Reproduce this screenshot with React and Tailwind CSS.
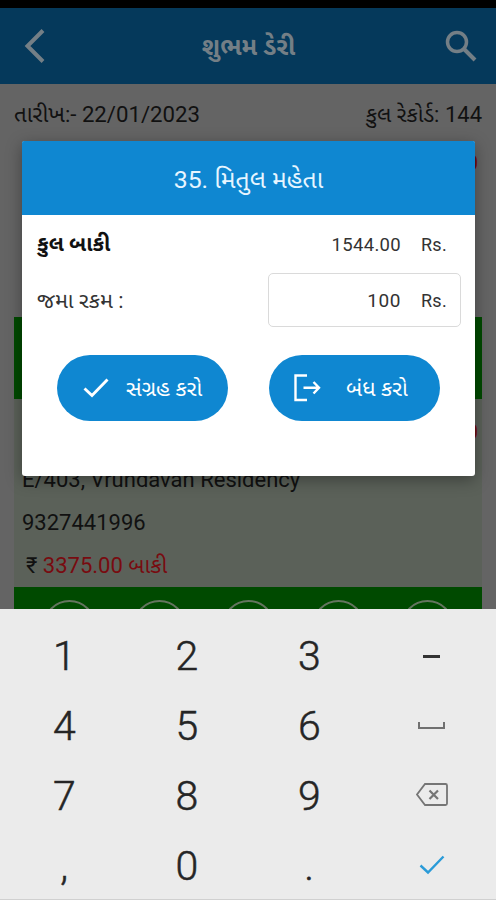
import React from "react";

function ActionCircles() {
  return (
    <div className="flex h-[70px] gap-[36.5px] overflow-hidden bg-[#004a00] pl-[29px] pt-[12.5px]">
      {[0, 1, 2, 3, 4].map((i) => (
        <div key={i} className="h-[53px] w-[53px] shrink-0 rounded-full border-2 border-[#64755f]" />
      ))}
    </div>
  );
}

function Key({ children }) {
  return <div className="flex h-[70px] items-center justify-center">{children}</div>;
}

function Keypad() {
  return (
    <div className="absolute inset-x-0 bottom-0 h-[291px] border-b border-[#d0d0d0] bg-[#ebebeb] pt-[12px] text-[#252525]">
      <div className="ml-[3px] grid w-[490px] grid-cols-4 text-[41px] font-light leading-none [-webkit-text-stroke:0.5px_#252525]">
        <Key>1</Key>
        <Key>2</Key>
        <Key>3</Key>
        <Key>
          <div className="h-[3px] w-[17px] bg-[#333]" />
        </Key>
        <Key>4</Key>
        <Key>5</Key>
        <Key>6</Key>
        <Key>
          <div className="mb-[1px] h-[7px] w-[27px] border-2 border-t-0 border-[#707070]" />
        </Key>
        <Key>7</Key>
        <Key>8</Key>
        <Key>9</Key>
        <Key>
          <svg className="mb-[3px]" width="34" height="24" viewBox="0 0 34 24" fill="none" stroke="#757575" strokeWidth="1.8">
            <path d="M10 1H30.5Q32 1 32 2.5V20.500Q32 22 30.500 22H10L2 11.500Z" />
            <path d="M14.500 7.500L23 16M23 7.500L14.500 16" strokeWidth="2.200" />
          </svg>
        </Key>
        <Key>,</Key>
        <Key>0</Key>
        <Key>.</Key>
        <Key>
          <svg className="mb-[2px]" width="26" height="20" viewBox="0 0 26 20" fill="none" stroke="#2a9bd8" strokeWidth="2.400">
            <path d="M1.500 10.500L9 17.500L24.500 1.500" />
          </svg>
        </Key>
      </div>
    </div>
  );
}

function PaymentDialog() {
  return (
    <div className="absolute left-[22px] top-[141px] h-[335px] w-[453px] overflow-visible rounded-[3px] bg-white text-[#333] shadow-[0_4px_16px_rgba(0,0,0,0.35)]">
      <div className="flex h-[74px] items-center justify-center rounded-t-[2px] bg-[#0f87d1] pt-[3px] text-[24.8px] text-[#e6f5ff]">
        <span className="whitespace-nowrap">35. મિતુલ મહેતા</span>
      </div>
      <div className="flex h-[58px] items-center pl-[15px] pr-[28px]">
        <span className="flex-1 pt-px text-[21.5px] font-bold text-[#111]">કુલ બાકી</span>
        <span className="mr-[20px] pt-[3px] text-[18.500px] tracking-[0.3px]">1544.00</span>
        <span className="pt-px text-[18px] tracking-[0.3px]">Rs.</span>
      </div>
      <div className="flex h-[54px] items-center pl-[15px] pr-[14px]">
        <span className="flex-1 pt-[3px] text-[21.8px]">જમા રકમ :</span>
        <div className="flex h-[54px] w-[193px] items-center justify-end rounded-[5px] border-[1.5px] border-[#dadada] pr-[13px]">
          <span className="mr-[20px] pt-[2px] text-[19px] tracking-[0.6px]">100</span>
          <span className="pt-px text-[18px] tracking-[0.3px]">Rs.</span>
        </div>
      </div>
      <div className="mt-[28px] flex gap-[41px] pl-[35px] text-[22px] text-white">
        <button className="flex h-[66px] w-[171px] items-center rounded-full bg-[#0f87d1] pl-[26px]">
          <svg width="26" height="20" viewBox="0 0 26 20" fill="none" stroke="#fff" strokeWidth="2.900">
            <path d="M1.500 10.500L9 17.500L24.500 1.500" />
          </svg>
          <span className="ml-[17px] whitespace-nowrap">સંગ્રહ કરો</span>
        </button>
        <button className="flex h-[66px] w-[171px] items-center rounded-full bg-[#0f87d1] pl-[24px]">
          <svg width="28" height="28" viewBox="0 0 28 28" fill="none" stroke="#fff" strokeWidth="2.400">
            <path d="M14 1.500H2.500V26H14" />
            <path d="M10.500 13.700H26M20.500 8L26 13.700L20.500 19.500" />
          </svg>
          <span className="ml-[25px] whitespace-nowrap">બંધ કરો</span>
        </button>
      </div>
    </div>
  );
}

export default function App() {
  return (
    <div className="relative flex h-[900px] w-[496px] flex-col overflow-hidden bg-[#646464] font-[Roboto,'Noto_Sans_Gujarati','Noto_Sans',sans-serif]">
      <div className="h-[8px] shrink-0 bg-black" />
      <header className="flex h-[76px] shrink-0 items-center bg-[#05395b] text-[#747f86]">
        <svg className="ml-[24px]" width="22" height="34" viewBox="0 0 22 34" fill="none" stroke="currentColor" strokeWidth="4">
          <path d="M19 1.500L3.500 17L19 32.500" />
        </svg>
        <h1 className="flex-1 whitespace-nowrap pl-[6px] pt-px text-center text-[24.8px] font-bold">શુભમ ડેરી</h1>
        <svg className="mr-[19px]" width="32" height="32" viewBox="0 0 32 32" fill="none" stroke="currentColor" strokeWidth="3.500">
          <circle cx="12" cy="12" r="9.500" />
          <path d="M19 19L30 30" strokeWidth="4" />
        </svg>
      </header>
      <div className="flex h-[58px] shrink-0 items-center justify-between pl-[14px] pr-[14px] pt-[2px] text-[22px] text-[#111]">
        <span className="pt-px text-[22.2px]">તારીખ:- 22/01/2023</span>
        <span>કુલ રેકોર્ડ: 144</span>
      </div>
      <section className="mx-[14px] flex h-[257px] shrink-0 flex-col justify-between">
        <div className="pr-[4px] pt-[9px] text-right text-[21px] leading-[24px] text-[#700b0b]">2450.00</div>
        <div className="h-[82px] bg-[#004a00]" />
      </section>
      <section className="mx-[14px] shrink-0 bg-[#5b6159] text-[#111]">
        <div className="h-[69px] pr-[4px] pt-[21px] text-right text-[21px] leading-[24px] text-[#700b0b]">3375.00</div>
        <p className="pl-[8px] text-[22px] leading-[24px]">E/403, Vrundavan Residency</p>
        <p className="mt-[18px] pl-[8px] text-[22px] leading-[26px]">9327441996</p>
        <p className="h-[51px] pl-[12px] pt-[17px] text-[22px] leading-[26px]">
          ₹ <span className="text-[#780b10]">3375.00 બાકી</span>
        </p>
        <ActionCircles />
      </section>
      <PaymentDialog />
      <Keypad />
    </div>
  );
}
